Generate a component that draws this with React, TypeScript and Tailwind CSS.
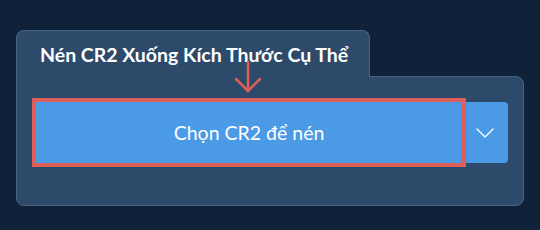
import { ChevronDown } from 'lucide-react';

export default function App() {
  return (
    <main
      className="relative w-[540px] h-[230px] bg-[#0f2239] pt-[30px] pl-4"
      style={{ fontFamily: 'Lato, "Noto Sans", sans-serif' }}
    >
      <div className="w-[508px] flex flex-col">
        {/* Tab */}
        <div className="relative z-10 -mb-px w-[354px] h-[47px] self-start rounded-t-lg border-x border-t border-[#4a6483] bg-[#2d4a6a] pl-[23px] pt-3">
          <h2 className="text-[19.5px] leading-6 font-bold text-white">Nén CR2 Xuống Kích Thước Cụ Thể</h2>
        </div>

        {/* Panel */}
        <div className="h-[130px] rounded-b-lg rounded-tr-lg border border-[#4a6483] bg-[#2d4a6a] pl-[19px] pr-[15px] pt-[25px]">
          <div className="flex h-[61px]">
            <button className="relative z-10 flex-1 flex items-center justify-center bg-[#4a9ae6] text-[19.5px] text-white font-normal outline-4 outline-[#dc5f5a]">
              Chọn CR2 để nén
            </button>
            <button className="w-[46px] flex items-center justify-center rounded-r bg-[#4a9ae6] text-white">
              <ChevronDown className="w-8 h-8" strokeWidth={1} />
            </button>
          </div>
        </div>
      </div>

      {/* Annotation arrow */}
      <svg
        className="absolute z-20 left-[234px] top-[60px]"
        width="30"
        height="34"
        viewBox="0 0 30 34"
        fill="none"
        stroke="#dc5f5a"
        strokeWidth="2.5"
        strokeLinecap="round"
      >
        <path d="M14 2 V31" />
        <path d="M2 19 L14 31 L26 19" />
      </svg>
    </main>
  );
}
